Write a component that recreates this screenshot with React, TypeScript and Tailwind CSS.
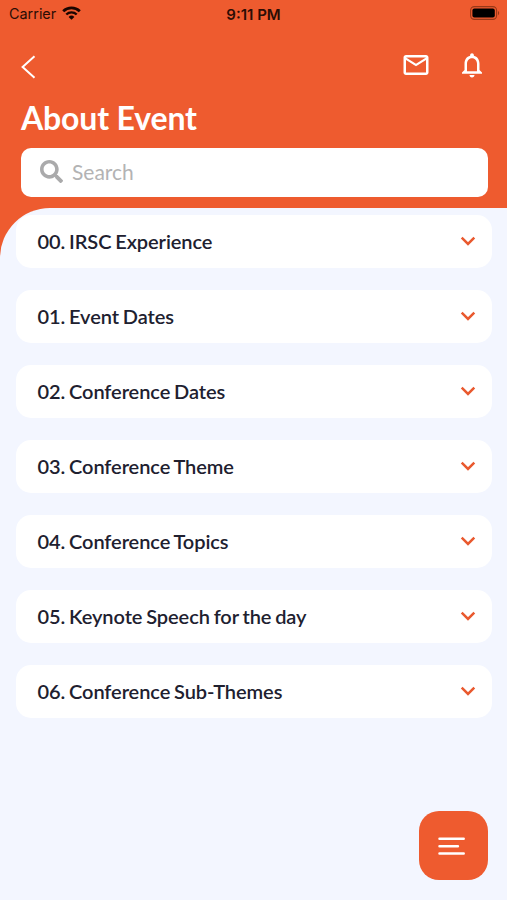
import { useState } from "react";
import { FaSearch } from "react-icons/fa";
import { MdMailOutline, MdNotificationsNone } from "react-icons/md";

interface SectionProps {
  title: string;
}

const sections: string[] = [
  "00. IRSC Experience",
  "01. Event Dates",
  "02. Conference Dates",
  "03. Conference Theme",
  "04. Conference Topics",
  "05. Keynote Speech for the day",
  "06. Conference Sub-Themes",
];

function StatusBar() {
  return (
    <div className="grid h-[28px] grid-cols-3 items-center pl-[9px] pr-[7px] font-[Inter,sans-serif] text-[14px] leading-none text-[#2b0d05]">
      <div className="flex items-center gap-[6px]">
        <span className="text-[14.4px]">Carrier</span>
        <svg className="mb-[2px]" width="19" height="14" viewBox="0 0 19 14" fill="none">
          <path d="M1.2 5.2a12 12 0 0 1 16.6 0" stroke="#1a0500" strokeWidth="2.8" />
          <path d="M4.3 8.5a7.5 7.5 0 0 1 10.4 0" stroke="#1a0500" strokeWidth="2.4" />
          <path d="M9.5 13.8 6.6 10.9a4.2 4.2 0 0 1 5.8 0z" fill="#1a0500" />
        </svg>
      </div>
      <span className="pr-[2px] text-center text-[15px] font-semibold">
        9:11 PM
      </span>
      <svg className="mb-[2px] justify-self-end" width="30" height="14" viewBox="0 0 30 14">
        <rect x="0.6" y="0.6" width="26" height="12.8" rx="3.8" fill="none" stroke="#983818" strokeWidth="1.1" />
        <rect x="2.4" y="2.4" width="22.4" height="9.2" rx="2" fill="#000" />
        <path d="M28 5v4.2c1.6-.6 1.6-3.6 0-4.2z" fill="#983818" />
      </svg>
    </div>
  );
}

function Section({ title }: SectionProps) {
  const [open, setOpen] = useState(false);

  return (
    <button
      onClick={() => setOpen(!open)}
      aria-expanded={open}
      className="flex h-[53px] w-full items-center justify-between rounded-[15px] bg-white pl-[21.5px] pr-[16px] text-left"
    >
      <span className="pb-px text-[20px] font-semibold leading-6 tracking-[-0.07px] [word-spacing:-1.1px] text-[#20202f]">
        {title}
      </span>
      <svg className="mb-px" width="16" height="10" viewBox="0 0 16 10" fill="none">
        <path d="M1.7 1.7 8 7.9l6.3-6.2" stroke="#e9592e" strokeWidth="2.5" />
      </svg>
    </button>
  );
}

function App() {
  return (
    <div className="relative flex h-[900px] w-full flex-col overflow-hidden bg-[#ee5b2f] font-[Lato,sans-serif]">
      <StatusBar />
      <header className="flex h-[180px] flex-col pl-[20.5px] pr-[19.5px]">
        <div className="flex h-[75px] items-center justify-between pr-[0.5px]">
          <button aria-label="Back" className="pt-[3px]">
            <svg width="15" height="24" viewBox="0 0 15 24" fill="none">
              <path d="M13.5 1.3 1.6 12l11.9 10.7" stroke="#fff" strokeWidth="2" />
            </svg>
          </button>
          <div className="flex items-center gap-[26px] pb-px text-[30px] text-white">
            <MdMailOutline />
            <MdNotificationsNone />
          </div>
        </div>
        <h1 className="h-[45px] pl-[0.5px] text-[32px] font-bold leading-[30px] tracking-[-0.15px] text-white">
          About Event
        </h1>
        <label className="flex h-[49px] shrink-0 items-center gap-[9px] rounded-[10px] bg-white pb-[2px] pl-[19.5px]">
          <FaSearch className="size-[23px] shrink-0 text-[#aaaaab]" />
          <input
            placeholder="Search"
            className="w-full bg-transparent text-[21px] outline-none placeholder:text-[#b3b3b4]"
          />
        </label>
      </header>
      <main className="flex flex-1 flex-col gap-[21.9px] rounded-tl-[50px] bg-[#f3f6ff] pl-[16px] pr-[15px] pt-[7.4px]">
        {sections.map((title) => (
          <Section key={title} title={title} />
        ))}
      </main>
      <button
        aria-label="Menu"
        className="absolute bottom-[20px] right-[19px] flex size-[69px] items-center justify-center rounded-[20px] bg-[#ee5b2f] pr-[4px]"
      >
        <svg width="28" height="20" viewBox="0 0 28 20" fill="none">
          <path
            d="M1.5 2.8h24.2M1.5 10.2h18.4M1.5 17.4h24.2"
            stroke="#fff"
            strokeWidth="2.5"
            strokeLinecap="round"
          />
        </svg>
      </button>
    </div>
  );
}

export default App;
